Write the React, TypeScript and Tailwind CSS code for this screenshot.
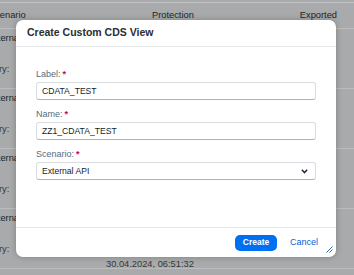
import React from 'react';

const rows = [0, 1, 2, 3];

const Field = ({ label, children }: { label: string; children: React.ReactNode }) => (
    <div className="flex flex-col">
        <div className="h-[11px] mb-[2px] flex items-center text-[9px] text-[#556b82] leading-none">
            {label}
            <span className="ml-[2px] text-[#ba066c] font-bold">*</span>
        </div>
        {children}
    </div>
);

const Input = ({ value }: { value: string }) => (
    <div className="h-[18px] flex items-center px-[5px] bg-white border border-[#d9dde2] border-b-[#aab4bf] rounded-[3px] text-[8.6px] text-[#131e29]">
        {value}
    </div>
);

export default function App() {
    return (
        <div className="relative w-[354px] h-[275px] overflow-hidden bg-[#a9aaab] font-['Liberation_Sans',Arial,sans-serif] text-[#232527]">
            {/* Table behind the overlay */}
            <div className="mt-[2px] border-t border-[#c3c4c5] h-[27px] flex items-center text-[9.3px] border-b border-b-[#bcbdbe]">
                <span className="ml-[-11px] w-[163px] shrink-0">Scenario</span>
                <span>Protection</span>
                <span className="ml-auto mr-[17px]">Exported</span>
            </div>
            {rows.map((r) => (
                <div key={r} className="relative h-[60px] border-b border-[#bcbdbe] text-[9.3px]">
                    <div className="ml-[-13px] pt-[3px]">External API</div>
                    <div className="ml-[-31px] mt-[17px] text-[#35383a]">Category:</div>
                    <div className="ml-[106px] mt-[1px] text-[#35383a]">30.04.2024, 06:51:32</div>
                </div>
            ))}

            {/* Dialog */}
            <div className="absolute left-[16px] top-[20px] w-[320px] h-[237px] bg-white rounded-[7px] shadow-[0_0_6px_rgba(0,0,0,0.25)] flex flex-col">
                <div className="h-[27px] shrink-0 border-b border-[#e4e6e8] flex items-center px-[11px] text-[10.5px] font-bold text-[#2a2e32]">
                    Create Custom CDS View
                </div>
                <div className="flex-1 px-[20px] pt-[22px] flex flex-col gap-[9px]">
                    <Field label="Label:">
                        <Input value="CDATA_TEST" />
                    </Field>
                    <Field label="Name:">
                        <Input value="ZZ1_CDATA_TEST" />
                    </Field>
                    <Field label="Scenario:">
                        <div className="h-[18px] flex items-center justify-between pl-[5px] pr-[7px] bg-white border border-[#d9dde2] border-b-[#aab4bf] rounded-[3px] text-[8.6px] text-[#131e29]">
                            <span>External API</span>
                            <svg width="7" height="5" viewBox="0 0 7 5">
                                <path d="M0.8 0.8 L3.5 3.6 L6.2 0.8" fill="none" stroke="#1d2d3e" strokeWidth="1.5" />
                            </svg>
                        </div>
                    </Field>
                </div>
                <div className="h-[30px] shrink-0 border-t border-[#e4e6e8] flex items-center justify-end pr-[12px] gap-[7px]">
                    <button className="h-[16px] w-[42px] rounded-[5px] bg-[#0070f2] text-white text-[8.5px] font-bold">
                        Create
                    </button>
                    <button className="h-[16px] px-[6px] text-[#0064d9] text-[9px]">Cancel</button>
                </div>
                <svg className="absolute right-[3px] bottom-[4px]" width="7" height="7" viewBox="0 0 7 7">
                    <path d="M6.5 0.5 L0.5 6.5 M6.5 3.5 L3.5 6.5" stroke="#2a6bb5" strokeWidth="1" />
                </svg>
            </div>
        </div>
    );
}
